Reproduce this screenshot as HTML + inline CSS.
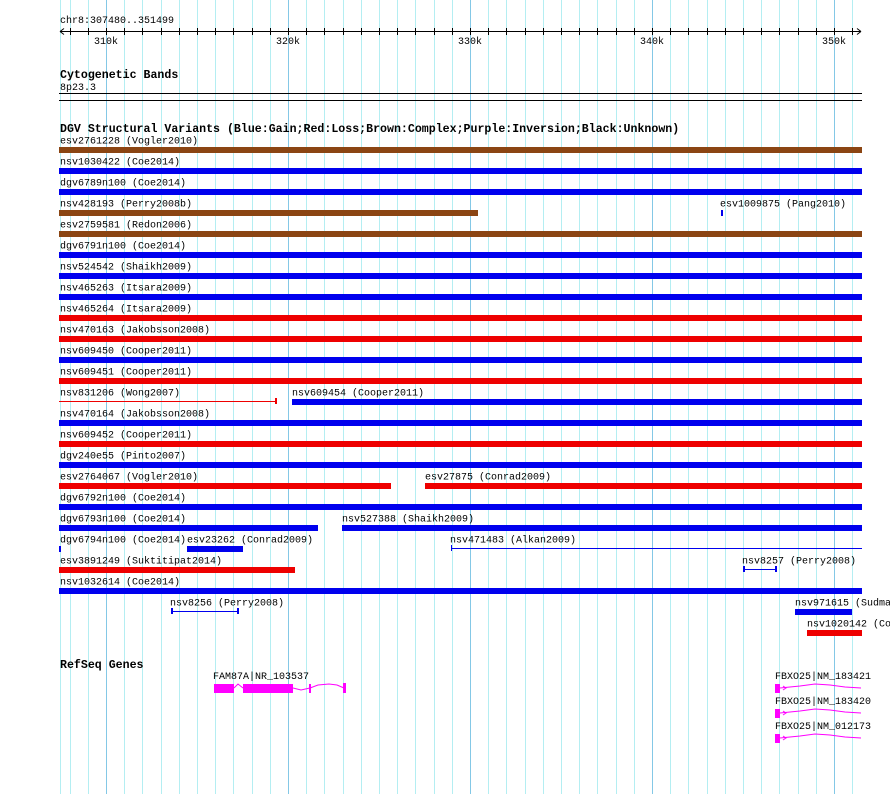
<!DOCTYPE html>
<html><head><meta charset="utf-8"><style>
html,body{margin:0;padding:0;background:#fff;width:890px;height:794px;overflow:hidden}
svg{display:block}
text{font-family:"Liberation Mono","DejaVu Sans Mono",monospace;font-size:10px;fill:#000}
.b{font-weight:bold;font-size:11.6px}
</style></head><body>
<svg id="s" width="890" height="794" xmlns="http://www.w3.org/2000/svg">
<g id="grid"></g>
<text x="60" y="23">chr8:307480..351499</text>
<line x1="60" y1="31.5" x2="861" y2="31.5" stroke="#000"/>
<path d="M60 31.5 l4 -3 M60 31.5 l4 3 M861 31.5 l-4 -3 M861 31.5 l-4 3" stroke="#000" fill="none"/>
<g id="ticks"></g>
<text x="106" y="44" text-anchor="middle">310k</text>
<text x="288" y="44" text-anchor="middle">320k</text>
<text x="470" y="44" text-anchor="middle">330k</text>
<text x="652" y="44" text-anchor="middle">340k</text>
<text x="834" y="44" text-anchor="middle">350k</text>
<text class="b" x="60" y="78">Cytogenetic Bands</text>
<text x="60" y="90">8p23.3</text>
<rect x="59" y="93" width="803" height="1" fill="#000"/>
<rect x="59" y="100" width="803" height="1" fill="#000"/>
<text class="b" x="60" y="132">DGV Structural Variants (Blue:Gain;Red:Loss;Brown:Complex;Purple:Inversion;Black:Unknown)</text>
<g transform="translate(0,-0.5)">
<text x="60" y="144">esv2761228 (Vogler2010)</text>
<text x="60" y="165">nsv1030422 (Coe2014)</text>
<text x="60" y="186">dgv6789n100 (Coe2014)</text>
<text x="60" y="207">nsv428193 (Perry2008b)</text>
<text x="720" y="207">esv1009875 (Pang2010)</text>
<text x="60" y="228">esv2759581 (Redon2006)</text>
<text x="60" y="249">dgv6791n100 (Coe2014)</text>
<text x="60" y="270">nsv524542 (Shaikh2009)</text>
<text x="60" y="291">nsv465263 (Itsara2009)</text>
<text x="60" y="312">nsv465264 (Itsara2009)</text>
<text x="60" y="333">nsv470163 (Jakobsson2008)</text>
<text x="60" y="354">nsv609450 (Cooper2011)</text>
<text x="60" y="375">nsv609451 (Cooper2011)</text>
<text x="60" y="396">nsv831206 (Wong2007)</text>
<text x="292" y="396">nsv609454 (Cooper2011)</text>
<text x="60" y="417">nsv470164 (Jakobsson2008)</text>
<text x="60" y="438">nsv609452 (Cooper2011)</text>
<text x="60" y="459">dgv240e55 (Pinto2007)</text>
<text x="60" y="480">esv2764067 (Vogler2010)</text>
<text x="425" y="480">esv27875 (Conrad2009)</text>
<text x="60" y="501">dgv6792n100 (Coe2014)</text>
<text x="60" y="522">dgv6793n100 (Coe2014)</text>
<text x="342" y="522">nsv527388 (Shaikh2009)</text>
<text x="60" y="543">dgv6794n100 (Coe2014)</text>
<text x="187" y="543">esv23262 (Conrad2009)</text>
<text x="450" y="543">nsv471483 (Alkan2009)</text>
<text x="60" y="564">esv3891249 (Suktitipat2014)</text>
<text x="742" y="564">nsv8257 (Perry2008)</text>
<text x="60" y="585">nsv1032614 (Coe2014)</text>
<text x="170" y="606">nsv8256 (Perry2008)</text>
<text x="795" y="606">nsv971615 (Sudmant2013)</text>
<text x="807" y="627">nsv1020142 (Coe2014)</text>
</g>
<rect x="59" y="147" width="803" height="6" fill="#8b4513"/>
<rect x="59" y="168" width="803" height="6" fill="#0000ee"/>
<rect x="59" y="189" width="803" height="6" fill="#0000ee"/>
<rect x="59" y="210" width="419" height="6" fill="#8b4513"/>
<rect x="721" y="210" width="2" height="6" fill="#0000ee"/>
<rect x="59" y="231" width="803" height="6" fill="#8b4513"/>
<rect x="59" y="252" width="803" height="6" fill="#0000ee"/>
<rect x="59" y="273" width="803" height="6" fill="#0000ee"/>
<rect x="59" y="294" width="803" height="6" fill="#0000ee"/>
<rect x="59" y="315" width="803" height="6" fill="#ee0000"/>
<rect x="59" y="336" width="803" height="6" fill="#ee0000"/>
<rect x="59" y="357" width="803" height="6" fill="#0000ee"/>
<rect x="59" y="378" width="803" height="6" fill="#ee0000"/>
<rect x="59" y="401" width="217" height="1" fill="#ee0000"/><rect x="275" y="398" width="2" height="6" fill="#ee0000"/>
<rect x="292" y="399" width="570" height="6" fill="#0000ee"/>
<rect x="59" y="420" width="803" height="6" fill="#0000ee"/>
<rect x="59" y="441" width="803" height="6" fill="#ee0000"/>
<rect x="59" y="462" width="803" height="6" fill="#0000ee"/>
<rect x="59" y="483" width="332" height="6" fill="#ee0000"/>
<rect x="425" y="483" width="437" height="6" fill="#ee0000"/>
<rect x="59" y="504" width="803" height="6" fill="#0000ee"/>
<rect x="59" y="525" width="259" height="6" fill="#0000ee"/>
<rect x="342" y="525" width="520" height="6" fill="#0000ee"/>
<rect x="59" y="546" width="2" height="6" fill="#0000ee"/>
<rect x="187" y="546" width="56" height="6" fill="#0000ee"/>
<rect x="451" y="548" width="411" height="1" fill="#0000ee"/><rect x="451" y="545" width="1" height="6" fill="#0000ee"/>
<rect x="59" y="567" width="236" height="6" fill="#ee0000"/>
<rect x="743" y="569" width="34" height="1" fill="#0000ee"/><rect x="743" y="566" width="2" height="6" fill="#0000ee"/><rect x="775" y="566" width="2" height="6" fill="#0000ee"/>
<rect x="59" y="588" width="803" height="6" fill="#0000ee"/>
<rect x="171" y="611" width="68" height="1" fill="#0000ee"/><rect x="171" y="608" width="2" height="6" fill="#0000ee"/><rect x="237" y="608" width="2" height="6" fill="#0000ee"/>
<rect x="795" y="609" width="57" height="6" fill="#0000ee"/>
<rect x="807" y="630" width="55" height="6" fill="#ee0000"/>
<text class="b" x="60" y="668">RefSeq Genes</text>
<text x="213" y="679">FAM87A|NR_103537</text>
<rect x="214" y="684" width="20" height="9" fill="#ff00ff"/>
<rect x="243" y="684" width="50" height="9" fill="#ff00ff"/>
<path d="M234 688 L238 684 L243 688 M293 688 L301 690 L310 688 M310 688 L318 685 L329 684 L337 685 L344 688" stroke="#ff00ff" fill="none"/>
<rect x="309" y="684" width="2" height="9" fill="#ff00ff"/>
<rect x="343" y="683" width="3" height="10" fill="#ff00ff"/>
<text x="775" y="679">FBXO25|NM_183421</text>
<rect x="775" y="684" width="5" height="9" fill="#ff00ff"/>
<path d="M780 688 L800 686 L815 684 L830 685 L845 687 L861 688 M783 686 l3 2 l-3 2" stroke="#ff00ff" fill="none"/>
<text x="775" y="704">FBXO25|NM_183420</text>
<rect x="775" y="709" width="5" height="9" fill="#ff00ff"/>
<path d="M780 713 L800 711 L815 709 L830 710 L845 712 L861 713 M783 711 l3 2 l-3 2" stroke="#ff00ff" fill="none"/>
<text x="775" y="729">FBXO25|NM_012173</text>
<rect x="775" y="734" width="5" height="9" fill="#ff00ff"/>
<path d="M780 738 L800 736 L815 734 L830 735 L845 737 L861 738 M783 736 l3 2 l-3 2" stroke="#ff00ff" fill="none"/>
</svg>
<script>
var g=document.getElementById('grid'),t=document.getElementById('ticks'),ns='http://www.w3.org/2000/svg';
function ln(p,x1,y1,x2,y2,c){var l=document.createElementNS(ns,'line');l.setAttribute('x1',x1);l.setAttribute('y1',y1);l.setAttribute('x2',x2);l.setAttribute('y2',y2);l.setAttribute('stroke',c);l.setAttribute('stroke-width',1);p.appendChild(l);}
ln(g,60.5,0,60.5,794,'#b4eef2');
for(var k=308;k<=351;k++){var x=Math.round(106+(k-310)*18.2)+0.5;var maj=k%10==0;
ln(g,x,0,x,794,maj?'#84c8e6':'#b4eef2');ln(t,x,28,x,35,'#000');}
</script>
</body></html>
